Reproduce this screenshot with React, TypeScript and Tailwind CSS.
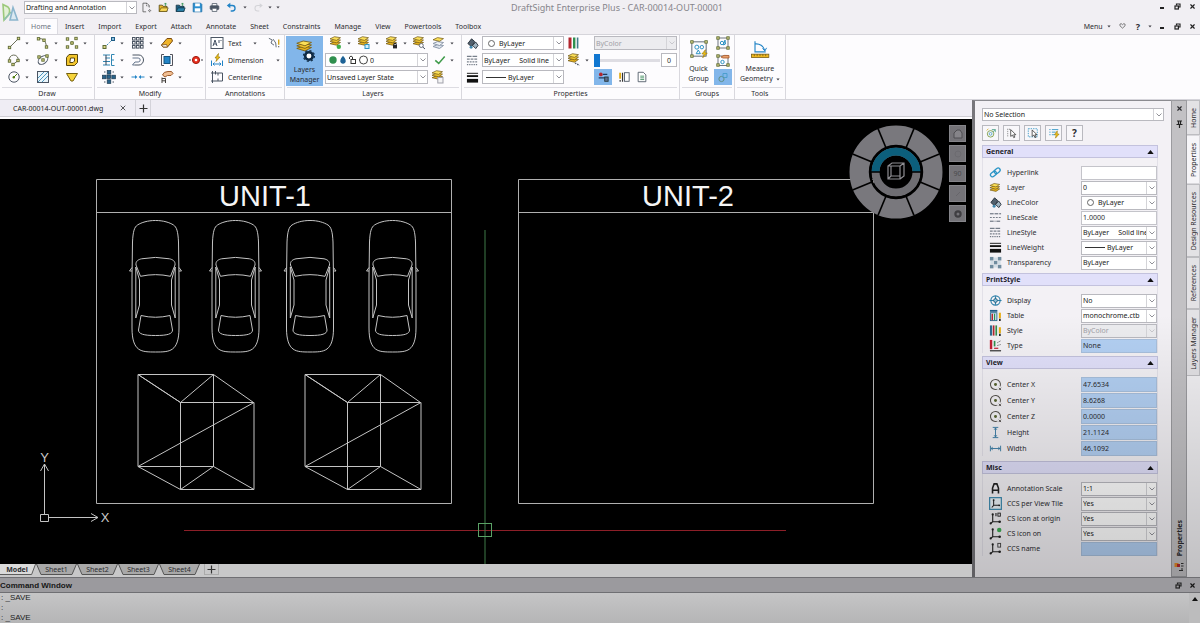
import React, { type ReactNode } from "react";
import { X } from "lucide-react";

/* ---------- small drawing helpers ---------- */

function Ico({ children, className = "size-3.5" }: { children: ReactNode; className?: string }) {
  return (
    <svg viewBox="0 0 14 14" fill="none" stroke="#4b5563" strokeWidth="1" className={`${className} block shrink-0`} aria-hidden="true">
      {children}
    </svg>
  );
}

function Dot({ x, y }: { x: number; y: number }) {
  return <rect x={x - 1.2} y={y - 1.2} width="2.4" height="2.4" fill="#dfd98a" stroke="#5d6a35" strokeWidth="0.9" />;
}

function Caret() {
  return (
    <svg viewBox="0 0 4 3" className="block h-[3px] w-1 shrink-0" aria-hidden="true">
      <path d="M0.4 0.5H3.6L2 2.6Z" fill="#3f3f46" />
    </svg>
  );
}

function Stack({ y = 0, children }: { y?: number; children?: ReactNode }) {
  return (
    <>
      <path d={`M1 ${y + 8.7}L5.5 ${y + 6.5}L11.5 ${y + 7.5}L7.5 ${y + 10.2}Z`} fill="#e3b01f" stroke="#6b5310" strokeWidth="0.7" />
      <path d={`M1 ${y + 6.3}L5.5 ${y + 4.1}L11.5 ${y + 5.1}L7.5 ${y + 7.8}Z`} fill="#f1c52e" stroke="#6b5310" strokeWidth="0.7" />
      <path d={`M1 ${y + 3.9}L5.5 ${y + 1.7}L11.5 ${y + 2.7}L7.5 ${y + 5.4}Z`} fill="#fbdf59" stroke="#6b5310" strokeWidth="0.7" />
      {children}
    </>
  );
}

const icons = {
  line: (<><path d="M2.5 11.5L11.5 2.5" stroke="#6b6f5a" /><Dot x={2.5} y={11.5} /><Dot x={11.5} y={2.5} /></>),
  arc: (<><path d="M2.5 2.5Q9.5 2 10.5 10.5" stroke="#6b6f5a" /><Dot x={2.5} y={2.8} /><Dot x={8} y={4.2} /><Dot x={10.5} y={11} /></>),
  points: (<><path d="M5 7H9M7 5V9" stroke="#7a8a3e" /><Dot x={2.5} y={3} /><Dot x={11} y={2.5} /><Dot x={7} y={7} /><Dot x={2.5} y={11} /><Dot x={11.5} y={11} /></>),
  polyline: (<><path d="M2.5 8A4.5 4.5 0 1 1 11 8M6 11.5L10.5 8" stroke="#6b6f5a" /><Dot x={2.5} y={8} /><Dot x={11} y={7.5} /><Dot x={6} y={11.5} /></>),
  ellipse: (<><ellipse cx="7" cy="7" rx="5.4" ry="3.6" transform="rotate(-38 7 7)" /><Dot x={7} y={7} /><Dot x={11} y={3} /><Dot x={3} y={4} /></>),
  region: (<><path d="M4 1.5H12.5V9.5L9.5 12.5H1.5V4.5Z" fill="#f2c52c" stroke="#57460f" /><path d="M5.5 5H9.5V8L8 9.5H4.8Z" fill="#fff" stroke="#57460f" /></>),
  circle: (<><circle cx="7" cy="7" r="5.2" /><path d="M7 7L10 4" stroke="#4d7c0f" /><circle cx="6.8" cy="7.3" r="1.2" fill="#4d7c0f" stroke="none" /></>),
  hatch: (<><rect x="1.5" y="1.5" width="11" height="11" fill="#eaf5fb" /><path d="M2 8L8 2M2 12L12 2M6 12L12 6" stroke="#3c8cb8" strokeWidth="0.9" /></>),
  mask: <path d="M1.5 3.5H12.5L8 11H6Z" fill="#f6d43b" stroke="#75600e" />,
  move: (<><path d="M2.5 11.5L11.5 2.5" stroke="#3c8cb8" strokeDasharray="2 1.4" /><rect x="1" y="9.5" width="3" height="3" fill="#dfd98a" stroke="#5d6a35" /><rect x="9.5" y="1.5" width="3" height="3" fill="#8cc0de" stroke="#1f5c86" /></>),
  pattern: (<>{[1.5, 5.5, 9.5].map((y) => [1.5, 5.5, 9.5].map((x) => <rect key={`${x}-${y}`} x={x} y={y} width="2.6" height="2.6" />))}</>),
  erase: (<><path d="M1.5 9L7 2.5H11.5L12.5 5L7.5 11H3Z" fill="#f0b429" stroke="#7a4a10" /><path d="M1.5 9L3 11H7.5L6.5 8.5Z" fill="#fff" stroke="#7a4a10" strokeWidth="0.8" /></>),
  align: (<><path d="M1 2H8M3.5 5H8M1 8.5H8M1 12H8" stroke="#2f86b3" /><path d="M4 2V12" stroke="#334155" /><path d="M12.5 1.5H9.5V12.5H12.5M9.5 7H12" stroke="#2f86b3" /></>),
  offset: (<><path d="M1.5 2H8A4.5 5 0 0 1 8 12H4" /><path d="M1.5 5H7.2A2 2 0 0 1 7.2 9H4L1.5 12H4" stroke="#64748b" /></>),
  stretch: (<><rect x="4" y="3.5" width="6" height="7" fill="#2384c6" stroke="#14547f" /><path d="M1.5 1.5V12.5M12.5 1.5V12.5M1.5 1.5H4M10 1.5H12.5M1.5 12.5H4M10 12.5H12.5" stroke="#52525b" /></>),
  explode: (<><path d="M0 7H14" stroke="#3f3f46" strokeDasharray="2 1" /><circle cx="7" cy="7" r="3.6" fill="#e8301f" stroke="#a11c10" /><circle cx="7" cy="7" r="1.3" fill="#fff" stroke="none" /></>),
  scale: (<>{[[5, 5], [5.2, 0.5], [0.5, 5.2], [9.8, 5.2], [5.2, 9.8]].map(([x, y]) => <rect key={`${x}-${y}`} x={x} y={y} width="3.6" height="3.6" fill="#28638a" stroke="#1e3a4f" strokeWidth="0.7" />)}<path d="M2 2H3.5M10.5 2H12M2 12H3.5M10.5 12H12" /></>),
  trim: (<><path d="M0.5 7H5M13.5 7H9" stroke="#2384c6" /><path d="M4 5L6.4 7L4 9ZM10 5L7.6 7L10 9Z" fill="#2384c6" stroke="none" /></>),
  change: (<><path d="M2.5 5Q3.5 1.5 8 1.5H11.5L13 3.5L11 5.5H7.5L5 7Z" fill="#f1bf93" stroke="#9a5a2c" /><path d="M2 13V7.5M2 8.5H5.5V13M2 10.8H5.5" stroke="#44403c" /></>),
  text: (<><rect x="1" y="1.5" width="12" height="11" fill="#fff" /><path d="M3 10L5 4L7 10M3.7 8H6.3M9 4V7M10.5 4.5H11.5" stroke="#334155" strokeWidth="0.9" /></>),
  dimension: (<><path d="M8.5 0.5L5 5H7L6 8.5L10 4H8Z" fill="#f5c518" stroke="#8b6b00" strokeWidth="0.6" /><path d="M1.5 7.5V13M12.5 7.5V13M3 11H11M4.5 9.5L3 11L4.5 12.5M9.5 9.5L11 11L9.5 12.5" stroke="#2384c6" /></>),
  centerline: (<><path d="M2.5 1V13M1 3H8M1 11H8M5.5 1V4.5M8 3H12.5V11H8V8.5M8 3V5.5" /></>),
  cloud: (<><path d="M1 1.5L5 3.5L3.5 7L7 9.5M6 2.5L9 7L9.5 12" /><path d="M12.5 3V9" stroke="#d4a514" strokeWidth="1.6" /><path d="M12.5 10.5V12" stroke="#333" /></>),
  layerNew: <Stack y={-1}><circle cx="9.8" cy="10.8" r="2.2" fill="#3fae49" stroke="none" /></Stack>,
  layerFreeze: <Stack y={-1}><rect x="8" y="8.5" width="4" height="4" fill="#d7f0fb" stroke="#2f93c5" /></Stack>,
  layerLock: <Stack y={-1}><rect x="8" y="9" width="4" height="3.4" fill="#27272a" stroke="none" /><path d="M8.9 9V7.5H11.2V9" stroke="#27272a" /></Stack>,
  layerFind: <Stack y={-1}><circle cx="9.3" cy="9.5" r="2" fill="#fff" stroke="#6b7280" /><path d="M10.8 11L13 13" /></Stack>,
  layerCopy: (<><path d="M1 10.5L5.5 8.6L11.5 9.5L7.5 12.5Z" fill="#dbe2ec" stroke="#8d99ab" /><path d="M1 7.5L5.5 5.6L11.5 6.5L7.5 9.5Z" fill="#eef2f7" stroke="#8d99ab" /><path d="M1 3.8L5.5 1.6L11.5 2.6L7.5 5.3Z" fill="#fbdf59" stroke="#6b5310" strokeWidth="0.7" /></>),
  layerState: <Stack y={-1}><rect x="6.8" y="7.5" width="5.2" height="5.5" fill="#f4f4f5" stroke="#a1a1aa" /></Stack>,
  check: <path d="M1.5 7.5L5.5 11L12.5 3" stroke="#3f9b4a" strokeWidth="1.8" />,
  gearStack: (
    <g strokeWidth="0.5" stroke="#7a5c10">
      <path d="M2.2 4.9L6 3.6L10.8 4.4L7 6.4Z" fill="#e3b01f" />
      <path d="M2.2 3.4L6 2.1L10.8 2.9L7 4.9Z" fill="#f1c52e" />
      <path d="M2.2 1.9L6 0.6L10.8 1.4L7 3.4Z" fill="#fbdf59" />
      <circle cx="9.3" cy="9.3" r="2.2" stroke="#0f2b46" strokeWidth="1.5" fill="#fff" />
      <circle cx="9.3" cy="9.3" r="3.2" stroke="#0f2b46" strokeWidth="0.7" strokeDasharray="1.2 1.3" />
    </g>
  ),
  color: (<><path d="M2 7L6 2L9.5 5L6 10.5Z" fill="#52606d" stroke="#27313a" /><path d="M7 9L10.5 5.5L13 9L10.5 12.5Z" fill="#9fb3c1" stroke="#27313a" /><circle cx="5.5" cy="11" r="1.6" fill="#3e87ae" stroke="none" /></>),
  style: (<><path d="M1 2.5H13" strokeDasharray="5 1" /><path d="M1 5.5H13" strokeDasharray="3 1" /><path d="M1 8.5H13" strokeDasharray="2 1" /><path d="M1 11.5H13" strokeDasharray="1.4 1" /></>),
  weight: (<><path d="M1 2.5H13" stroke="#111" /><path d="M1 5.5H13" stroke="#111" strokeWidth="2" /><path d="M1 10.5H13" stroke="#111" strokeWidth="4" /></>),
  bars: (<><path d="M3 1.5V12.5" stroke="#b3262e" strokeWidth="3" /><path d="M7.2 1.5V12.5" stroke="#2f8f4e" strokeWidth="2.4" /><path d="M10.6 1.5V12.5" stroke="#3f7d8a" strokeWidth="1.6" /></>),
  transparency: <Stack y={-1}><path d="M8 10L12.5 12.5" strokeWidth="1.4" strokeDasharray="1.5 1" /></Stack>,
  propA: (<><circle cx="4.5" cy="4" r="2.2" fill="#b3262e" stroke="none" /><path d="M7 4H12M2 8H10" stroke="#1e3a5f" strokeWidth="1.6" /><rect x="9" y="7" width="4" height="5" fill="#5b6f92" stroke="#233" /></>),
  propB: (<><path d="M2.5 2V9" stroke="#e0a912" strokeWidth="2.2" /><path d="M2.5 10.5V12.5M5.3 2V12.5" stroke="#333" strokeWidth="1.4" /><rect x="7.5" y="2" width="5.5" height="10" fill="#fff" /></>),
  sheet: (<><path d="M2.5 1.5H8.5L11.5 4.5V12.5H2.5Z" fill="#fff" /><path d="M5 6H9.5M5 8H9.5M5 10H9.5" stroke="#3c8a5b" /></>),
  group: (<><rect x="2" y="2" width="10" height="10" strokeWidth="0.8" /><Dot x={2} y={2} /><Dot x={12} y={2} /><Dot x={2} y={12} /><Dot x={12} y={12} /><circle cx="6" cy="7" r="1.7" stroke="#2f93c5" /><path d="M9 4L9.5 8L7.5 9Z" stroke="#2f93c5" /></>),
  groupEdit: (<><rect x="2" y="3" width="10" height="9.5" strokeWidth="0.8" /><Dot x={2} y={3} /><Dot x={2} y={12} /><Dot x={12} y={12} /><path d="M5 4Q7 1.5 13 2.5V5H7Z" fill="#e8a06c" stroke="#a4562a" strokeWidth="0.8" /><circle cx="6.5" cy="9" r="1.7" stroke="#2f93c5" /></>),
  quick: (<><rect x="2" y="2" width="10" height="10" strokeWidth="0.6" /><g strokeWidth="0.6"><rect x="1.2" y="1.2" width="1.7" height="1.7" fill="#dfd98a" stroke="#5d6a35" /><rect x="11.1" y="1.2" width="1.7" height="1.7" fill="#dfd98a" stroke="#5d6a35" /><rect x="1.2" y="11.1" width="1.7" height="1.7" fill="#dfd98a" stroke="#5d6a35" /></g><circle cx="5.5" cy="5.7" r="1.4" stroke="#2f93c5" strokeWidth="0.7" /><circle cx="9" cy="5.7" r="1.2" stroke="#2f93c5" strokeWidth="0.7" /><path d="M5 10.3L6.5 7.7L8 10.3Z" stroke="#2f93c5" strokeWidth="0.7" /><path d="M11.5 7.5L9 10.5H10.6L9.6 13.2L12.8 9.8H11.2Z" fill="#f5c518" stroke="#8b6b00" strokeWidth="0.4" /></>),
  measure: (<><path d="M3.5 1.5V9H11M3.5 3.5A6 6 0 0 1 10.3 8" stroke="#2384c6" strokeWidth="0.8" /><path d="M8.8 6.5L10.4 8.4L11.6 6.2" stroke="#2384c6" strokeWidth="0.7" /><rect x="1" y="10.6" width="12.2" height="2.4" fill="#f0b91f" stroke="#6b5310" strokeWidth="0.5" /><path d="M3 10.6V12M5 10.6V12M7 10.6V12M9 10.6V12M11 10.6V12" stroke="#6b5310" strokeWidth="0.5" /></>),
  groupPick: (<><circle cx="5.5" cy="9" r="2.6" stroke="#5f8f86" /><path d="M7 7.5V3.5H11V7.5H8" stroke="#4b9fce" /></>),
  newDoc: (<><path d="M2.5 1.5H7.5L10.5 4.5V7M6.5 12.5H2.5V1.5" stroke="#555" /><path d="M7 1.5V5H10M9 11H13M11 9V13" stroke="#555" strokeDasharray="1.5 1" /></>),
  open: (<><path d="M1.5 12V4H5.5L6.5 5.5H11.5V12Z" fill="#e9b629" stroke="#4f4210" /><path d="M1.5 12L4 7.5H13L11 12Z" fill="#fbd95a" stroke="#4f4210" strokeWidth="0.8" /><path d="M9.5 5V1.5M8 3L9.5 1.2L11 3" stroke="#2f8f4e" /></>),
  openCloud: (<><path d="M1.5 12V4H5.5L6.5 5.5H11.5V12Z" fill="#1d5c7f" stroke="#12303f" /><path d="M1.5 12L4 7.5H13L11 12Z" fill="#2a82ab" stroke="#12303f" strokeWidth="0.8" /><path d="M9.5 5V1.5M8 3L9.5 1.2L11 3" stroke="#2f8f4e" /></>),
  save: (<><path d="M1.5 1.5H11L12.5 3V12.5H1.5Z" fill="#2b8fd0" stroke="#1c6fa8" /><rect x="4" y="1.8" width="6" height="3.7" fill="#fff" stroke="none" /><rect x="3.5" y="8" width="7" height="4.2" fill="#fff" stroke="none" /></>),
  print: (<><path d="M4 5V2H10V5" fill="#fff" /><rect x="1.5" y="4.8" width="11" height="4.7" rx="1" fill="#4b5563" /><path d="M4 8H10V12H4Z" fill="#fff" /></>),
  undo: (<><path d="M3 4.5H8A3.4 3.4 0 0 1 8 11.5H6" stroke="#2384c6" strokeWidth="1.7" /><path d="M5.5 1L1 4.5L5.5 8Z" fill="#2384c6" stroke="none" /></>),
  redo: (<><path d="M11 4.5H6A3.4 3.4 0 0 0 6 11.5H8" stroke="#d4d4d8" strokeWidth="1.4" /><path d="M8.5 1.5L12.5 4.5L8.5 7.5Z" fill="#d4d4d8" stroke="none" /></>),
  link: (<g transform="rotate(-40 7 7)" stroke="#2b95c6" strokeWidth="1.4"><rect x="0.8" y="4.6" width="7" height="4.4" rx="2.2" /><rect x="6" y="4.6" width="7" height="4.4" rx="2.2" /></g>),
  layers: <Stack y={1} />,
  lineScale: (<><path d="M1 3H13" strokeDasharray="4 1" /><path d="M1 7H13" strokeDasharray="2 1.2" strokeWidth="0.8" /><path d="M1 11H13" strokeDasharray="4 1 1 1" /></>),
  checker: (<><path d="M5 3H9M3 5V9M11 5V9M5 11H9" stroke="#d3dee6" strokeWidth="3" />{[[1, 1], [9.5, 1], [5.2, 5.2], [1, 9.5], [9.5, 9.5]].map(([x, y]) => <rect key={`${x}-${y}`} x={x} y={y} width="3.8" height="3.8" fill="#6f8c9f" stroke="none" />)}</>),
  globe: (<><circle cx="7" cy="7" r="5" stroke="#2b7fa8" strokeWidth="1.2" /><path d="M0.5 7H13.5M7 2.5V11.5" stroke="#2b7fa8" strokeWidth="1.2" /><circle cx="7" cy="7" r="2" fill="#8fc3dc" stroke="#22607f" /></>),
  table: (<><path d="M1 2H9" stroke="#1f5c86" strokeWidth="2" /><rect x="1.5" y="4" width="7" height="8.5" fill="#cfe4ef" stroke="#2c6c90" /><path d="M3.5 5V12" stroke="#b3262e" strokeWidth="1.6" /><path d="M6 5V12" stroke="#2f8f4e" strokeWidth="1.2" /><path d="M11.7 4V10" stroke="#e6ac12" strokeWidth="2.2" /><path d="M11.7 10.5V13" stroke="#222" strokeWidth="1.8" /></>),
  styleBars: (<><path d="M2.2 1.5V12.5" stroke="#2c6c90" strokeWidth="2.4" /><path d="M5 1.5V12.5" stroke="#b3262e" strokeWidth="1.8" /><path d="M7.8 1.5V12.5" stroke="#2f8f4e" strokeWidth="1.8" /><path d="M11.7 3.5V10" stroke="#e6ac12" strokeWidth="2.2" /><path d="M11.7 10.5V13" stroke="#222" strokeWidth="1.8" /></>),
  type: (<><path d="M2.2 1V11" stroke="#c01f34" strokeWidth="2.6" /><path d="M1 12.7H13" stroke="#222" strokeWidth="1.2" /><path d="M6 2V8" stroke="#2f8f4e" strokeWidth="1.8" /><path d="M9 4L12.5 2M9 7L12.5 6" stroke="#555" strokeDasharray="1.4 1" /><path d="M5.5 10H10" stroke="#c01f34" strokeWidth="1.3" /></>),
  center: (<><path d="M12 9A5.4 5.4 0 1 0 9 12" stroke="#57534e" strokeWidth="1.1" /><circle cx="7" cy="7" r="1.6" fill="#57632f" stroke="none" /><path d="M10.5 10.5L13 13M13 10.5L10.5 13" stroke="#44403c" strokeWidth="0.9" /></>),
  height: <path d="M4 1.5H10M4 12.5H10M7 2V12M5.6 4L7 2.2L8.4 4M5.6 10L7 11.8L8.4 10" stroke="#3a7ca5" />,
  width: <path d="M1.5 4V10M12.5 4V10M2 7H12M4 5.6L2.2 7L4 8.4M10 5.6L11.8 7L10 8.4" stroke="#3a7ca5" />,
  annot: <path d="M3.8 12.5V6.5L5.5 2H8.5L10.2 6.5V12.5M3.8 8.8H10.2" stroke="#222" strokeWidth="1.7" />,
  ccsView: (<><rect x="0.7" y="0.7" width="12.6" height="12.6" fill="#eef4f8" stroke="#3b8ab0" strokeWidth="1.3" /><path d="M5 3V9H11M5 9L3 11.3" stroke="#222" strokeWidth="1.1" /><circle cx="5" cy="3.3" r="1" fill="#222" stroke="none" /><circle cx="11" cy="9" r="1" fill="#222" stroke="none" /></>),
  ccsOrigin: (<><path d="M4 3V10.5H11M4 10.5L1.5 12.5M7.5 1V4.5" stroke="#222" strokeWidth="1.2" /><rect x="9.6" y="1.2" width="2.6" height="3.3" stroke="#222" /><circle cx="4" cy="2.6" r="1.2" fill="#222" stroke="none" /><circle cx="11.5" cy="10.5" r="1.4" fill="#222" stroke="none" /><circle cx="1.8" cy="12.3" r="1.2" fill="#222" stroke="none" /></>),
  ccsOn: (<><path d="M4 3V10.5H11M4 10.5L1.5 12.5" stroke="#222" strokeWidth="1.2" /><circle cx="4" cy="2.6" r="1.2" fill="#222" stroke="none" /><circle cx="11.5" cy="10.5" r="1.4" fill="#222" stroke="none" /><circle cx="1.8" cy="12.3" r="1.2" fill="#222" stroke="none" /><circle cx="11" cy="3.2" r="2.4" fill="#3fae55" stroke="none" /></>),
  ccsName: (<><path d="M4 3V10.5H11M4 10.5L1.5 12.5" stroke="#222" strokeWidth="1.2" /><circle cx="4" cy="2.6" r="1.2" fill="#222" stroke="none" /><circle cx="11.5" cy="10.5" r="1.4" fill="#222" stroke="none" /><circle cx="1.8" cy="12.3" r="1.2" fill="#222" stroke="none" /><rect x="9.5" y="1.5" width="3" height="4" stroke="#444" /></>),
  pickAdd: (<><circle cx="6.5" cy="8" r="3.8" stroke="#7a9a43" /><circle cx="6.5" cy="8" r="1.6" stroke="#4fa0c6" /><path d="M8 3H12V6M12 3L9 6" stroke="#4fa38c" /><path d="M2 4L4 2" stroke="#d5b22b" /></>),
  pick: (<><path d="M2 2V11M4 2V4" stroke="#888" strokeDasharray="1.5 1" /><path d="M5.5 3V11L7.6 9.4L9 12.4L10.4 11.8L9 9H11.5Z" fill="#fff" stroke="#333" strokeWidth="0.9" /></>),
  pickBox: (<><rect x="1.5" y="2" width="10.5" height="9.5" stroke="#2f93c5" strokeDasharray="1.6 1.2" /><path d="M6 3.5V11L8 9.4L9.3 12.4L10.6 11.8L9.3 9H11.7Z" fill="#fff" stroke="#333" strokeWidth="0.9" /></>),
  quickPick: (<><path d="M1.5 3H3M4.5 3H12M1.5 6H3M4.5 6H9M1.5 9H3M4.5 9H8" stroke="#2f93c5" /><path d="M10.8 4.5L7.5 9H9.5L8.7 13L13 8.2H10.8Z" fill="#f5c518" stroke="#8b6b00" strokeWidth="0.6" /></>),
};
type IconName = keyof typeof icons;

function Icon({ name, className }: { name: IconName; className?: string }) {
  return <Ico className={className}>{icons[name]}</Ico>;
}

/* ---------- controls ---------- */

function Tool({ icon, label, caret = true }: { icon: IconName; label: string; caret?: boolean }) {
  return (
    <button type="button" aria-label={label} className="flex h-4 w-[29px] items-center gap-1">
      <Icon name={icon} />
      {caret && <Caret />}
    </button>
  );
}

function Combo({ label, value, prefix, disabled = false, id, options = [], className = "" }: { label: string; value: string; prefix?: ReactNode; disabled?: boolean; id?: string; options?: string[]; className?: string }) {
  return (
    <div className={`flex items-center overflow-hidden border border-[#b9b9bf] pl-px ${disabled ? "bg-[#ececef] text-[#a0a0a6]" : "bg-white text-[#222]"} ${className}`}>
      {prefix}
      <select id={id} aria-label={id ? undefined : label} disabled={disabled} defaultValue={value} className="h-full min-w-0 flex-1 appearance-none bg-transparent p-0 leading-[11px] outline-none">
        <option>{value}</option>
        {options.map((o) => (
          <option key={o}>{o}</option>
        ))}
      </select>
      <span className="pointer-events-none flex h-full w-2.5 shrink-0 items-center justify-center border-l border-[#d4d4d8]">
        <svg viewBox="0 0 6 4" className="h-1 w-1.5" aria-hidden="true">
          <path d="M0.5 0.5L3 3L5.5 0.5" fill="none" stroke={disabled ? "#c4c4c8" : "#85858c"} strokeWidth="0.9" />
        </svg>
      </span>
    </div>
  );
}

const Ring = () => <span className="mx-1 size-[7px] shrink-0 rounded-full border border-[#666] bg-white" />;
const Rule = () => <span className="mx-0.5 h-px w-5 shrink-0 bg-[#333]" />;

function Group({ name, className = "", children }: { name: string; className?: string; children: ReactNode }) {
  return (
    <section aria-label={name} className="flex shrink-0 flex-col border-r border-[#d9d8de]">
      <div className={`flex h-[52px] items-start ${className}`}>{children}</div>
      <h2 className="mx-0.5 flex h-3 items-center justify-center border-t border-[#dddce2]">{name}</h2>
    </section>
  );
}

function WindowButtons() {
  return (
    <div className="flex items-center gap-2 text-[#222]">
      <button type="button" aria-label="Minimize" className="flex h-2 w-1.5 items-end pb-px"><span className="h-0.5 w-1 bg-[#222]" /></button>
      <button type="button" aria-label="Restore"><RestoreIcon /></button>
      <button type="button" aria-label="Close"><X className="size-[7px]" strokeWidth={4} /></button>
    </div>
  );
}

function RestoreIcon() {
  return (
    <svg viewBox="0 0 7 7" className="block size-[7px]" fill="none" stroke="#222" aria-hidden="true">
      <path d="M2.5 2.5V1H6V4H4.5" strokeWidth="1.2" />
      <rect x="1" y="3" width="3.4" height="3" strokeWidth="1.2" />
    </svg>
  );
}

/* ---------- header ---------- */

const menuTabs = ["Home", "Insert", "Import", "Export", "Attach", "Annotate", "Sheet", "Constraints", "Manage", "View", "Powertools", "Toolbox"];

function Header() {
  return (
    <header className="flex bg-[#f1eff3]">
      <svg viewBox="0 0 24 34" className="h-[34px] w-6 shrink-0" role="img" aria-label="DraftSight">
        <path d="M3 4.5L8 7Q11 10 8.5 15L4 20Z" fill="#e3f0d6" stroke="#9cc97b" strokeWidth="1.6" />
        <path d="M13 7.5L17.5 20H10Z" fill="#dbe9f1" stroke="#8bb5cd" strokeWidth="1.6" />
        <path d="M4 20L11 12" stroke="#8fc0ae" strokeWidth="1.6" />
      </svg>
      <div className="min-w-0 flex-1">
        <div className="grid h-[18px] grid-cols-[1fr_auto_1fr] items-start">
          <div className="flex items-center gap-1 pt-px">
            <Combo label="Workspace" value="Drafting and Annotation" className="h-[13px] w-[113px]" />
            {(["newDoc", "open", "openCloud", "save", "print", "undo"] as IconName[]).map((n) => (
              <button key={n} type="button" aria-label={n} className="mr-0.5"><Icon name={n} className="size-[11px]" /></button>
            ))}
            <Caret />
            <button type="button" aria-label="Redo" className="ml-0.5"><Icon name="redo" className="size-[11px]" /></button>
            <Caret />
            <Caret />
          </div>
          <h1 className="pl-2.5 text-[9px] leading-4 text-[#86858b]">DraftSight Enterprise Plus - CAR-00014-OUT-00001</h1>
          <div className="flex justify-end pt-0.5 pr-1"><WindowButtons /></div>
        </div>
        <div className="flex h-4 items-end justify-between">
          <nav className="flex">
            {menuTabs.map((t, i) => (
              <button key={t} type="button" className={i === 0 ? "h-4 border border-b-0 border-[#dcdbe1] bg-[#fdfcfe] px-1.5 text-[#6b7280]" : "h-4 px-[7px]"}>{t}</button>
            ))}
          </nav>
          <div className="flex h-4 items-center gap-2 pr-1">
            <button type="button" className="flex items-center gap-1">Menu <Caret /></button>
            <button type="button" aria-label="Favorites">
              <svg viewBox="0 0 8 7" className="h-[6px] w-[7px]" fill="none" stroke="#666" aria-hidden="true"><path d="M4 6L1 3.2V1.4L2.5 0.8L4 2L5.5 0.8L7 1.4V3.2Z" /></svg>
            </button>
            <button type="button" className="flex items-center gap-2 pl-0.5 text-[9px] font-bold">? <Caret /></button>
            <WindowButtons />
          </div>
        </div>
      </div>
    </header>
  );
}

/* ---------- ribbon ---------- */

const col = "flex flex-col gap-px";

function Ribbon() {
  return (
    <div className="flex h-[66px] border-y border-[#d6d5db] bg-[#fdfcfe]">
      <Group name="Draw" className="pl-[7px]">
        <div className="grid grid-cols-3 gap-y-px">
          <Tool icon="line" label="Line" />
          <Tool icon="arc" label="Arc" />
          <Tool icon="points" label="Points" />
          <Tool icon="polyline" label="Polyline" />
          <Tool icon="ellipse" label="Ellipse" />
          <Tool icon="region" label="Region" caret={false} />
          <Tool icon="circle" label="Circle" />
          <Tool icon="hatch" label="Hatch" />
          <Tool icon="mask" label="Mask" caret={false} />
        </div>
      </Group>
      <Group name="Modify" className="pr-px pl-[7px]">
        <div className="grid grid-cols-[29px_29px_29px_15px] gap-y-px">
          <Tool icon="move" label="Move" />
          <Tool icon="pattern" label="Pattern" />
          <Tool icon="erase" label="Erase" />
          <span />
          <Tool icon="align" label="Align" />
          <Tool icon="offset" label="Offset" caret={false} />
          <Tool icon="stretch" label="Stretch" caret={false} />
          <Tool icon="explode" label="Explode" caret={false} />
          <Tool icon="scale" label="Scale" />
          <Tool icon="trim" label="Trim" />
          <Tool icon="change" label="Change" />
        </div>
      </Group>
      <Group name="Annotations" className="px-1">
        <div className={`${col} w-[70px]`}>
          <div className="flex h-4 items-center justify-between">
            <button type="button" className="flex items-center gap-1"><Icon name="text" />Text</button>
            <Caret />
            <button type="button" aria-label="Cloud"><Icon name="cloud" className="size-3" /></button>
          </div>
          <button type="button" className="flex h-4 items-center gap-1"><Icon name="dimension" />Dimension<span className="ml-auto"><Caret /></span></button>
          <button type="button" className="flex h-4 items-center gap-1"><Icon name="centerline" />Centerline</button>
        </div>
      </Group>
      <Group name="Layers" className="gap-0.5 px-px">
        <button type="button" className="mt-px flex h-[50px] w-[37px] flex-col items-center justify-between bg-[#82b6ea] pt-1 pb-px leading-[10px]">
          <Icon name="gearStack" className="size-6" />
          <span>Layers<br />Manager</span>
        </button>
        <div className={`${col} w-[135px]`}>
          <div className="flex h-4 items-center pl-1">
            <Tool icon="layerNew" label="New layer" />
            <Tool icon="layerFreeze" label="Freeze layer" />
            <Tool icon="layerLock" label="Lock layer" />
            <button type="button" aria-label="Find layer" className="mr-1.5"><Icon name="layerFind" /></button>
            <Tool icon="layerCopy" label="Copy layer" />
          </div>
          <div className="flex h-4 items-center justify-between pr-1.5">
            <Combo
              label="Active layer"
              value="0"
              options={["Defpoints"]}
              className="h-3.5 w-[103px]"
              prefix={
                <svg viewBox="0 0 42 12" className="mr-px h-3 w-[42px] shrink-0" aria-hidden="true">
                  <circle cx="6" cy="6" r="3.7" fill="#2f8f4e" />
                  <path d="M16 1.8Q12 6.3 13.8 8.8Q16 10.8 18.2 8.8Q20 6.3 16 1.8Z" fill="#1d6296" />
                  <path d="M22.5 5V3.2Q24 1 25.5 3V6" fill="none" stroke="#333" />
                  <rect x="24" y="5.5" width="4.5" height="4" fill="#fff" stroke="#333" />
                  <circle cx="36.5" cy="6" r="4" fill="#fff" stroke="#444" />
                </svg>
              }
            />
            <button type="button" aria-label="Apply" className="flex items-center gap-1"><Icon name="check" className="size-3" /><Caret /></button>
          </div>
          <div className="flex h-4 items-center gap-[3px]">
            <Combo label="Layer state" value="Unsaved Layer State" className="h-3.5 w-[103px]" />
            <button type="button" aria-label="Layer states"><Icon name="layerState" /></button>
          </div>
        </div>
      </Group>
      <Group name="Properties" className="gap-[3px] pr-0.5 pl-1">
        <div className={col}>
          {([
            ["color", "Line color", <Combo key="c" label="Line color" value="ByLayer" prefix={<Ring />} className="h-3.5 w-[82px]" />],
            ["style", "Line style", <Combo key="s" label="Line style" value={"ByLayer \u00a0 \u00a0 Solid line"} className="h-3.5 w-[82px]" />],
            ["weight", "Line weight", <Combo key="w" label="Line weight" value="ByLayer" prefix={<Rule />} className="h-3.5 w-[82px]" />],
          ] as [IconName, string, ReactNode][]).map(([icon, label, combo]) => (
            <div key={label} className="flex h-4 items-center gap-[3px]"><Icon name={icon} className="size-[13px]" />{combo}</div>
          ))}
        </div>
        <div className={`${col} w-6`}>
          <button type="button" aria-label="Print style" className="flex h-4 items-center"><Icon name="bars" /></button>
          <Tool icon="transparency" label="Transparency" />
        </div>
        <div className={`${col} w-[83px]`}>
          <div className="flex h-4 items-center"><Combo label="Print style" value="ByColor" disabled className="h-3.5 flex-1" /></div>
          <div className="flex h-4 items-center gap-px">
            <input type="range" aria-label="Transparency level" min={0} max={90} defaultValue={0} className="h-3 min-w-0 flex-1 appearance-none bg-transparent [&::-webkit-slider-runnable-track]:h-[3px] [&::-webkit-slider-runnable-track]:bg-[#dedde3] [&::-webkit-slider-thumb]:-mt-[5px] [&::-webkit-slider-thumb]:h-[13px] [&::-webkit-slider-thumb]:w-1.5 [&::-webkit-slider-thumb]:appearance-none [&::-webkit-slider-thumb]:bg-[#1177d1]" />
            <input type="text" aria-label="Transparency value" defaultValue="0" className="h-3.5 w-4 border border-[#b9b9bf] bg-white p-0 text-center" />
          </div>
          <div className="flex h-4 items-center gap-1.5">
            <button type="button" aria-label="Match" className="flex h-4 w-[18px] items-center justify-center bg-[#82b6ea]"><Icon name="propA" className="size-3" /></button>
            <button type="button" aria-label="Paint"><Icon name="propB" className="size-3" /></button>
            <button type="button" aria-label="List"><Icon name="sheet" className="size-3" /></button>
          </div>
        </div>
      </Group>
      <Group name="Groups" className="pl-[3px]">
        <button type="button" className="flex h-[50px] w-[31px] flex-col items-center justify-between pt-1 pb-px leading-[10px]">
          <Icon name="quick" className="size-5" />
          <span>Quick<br />Group</span>
        </button>
        <div className={`${col} pr-0.5`}>
          <button type="button" aria-label="Group" className="flex h-4 w-[18px] items-center justify-center"><Icon name="group" /></button>
          <button type="button" aria-label="Edit group" className="flex h-4 w-[18px] items-center justify-center"><Icon name="groupEdit" /></button>
          <button type="button" aria-label="Pick group" className="flex h-4 w-[18px] items-center justify-center bg-[#82b6ea]"><Icon name="groupPick" /></button>
        </div>
      </Group>
      <Group name="Tools" className="px-[5px]">
        <button type="button" className="flex h-[50px] flex-col items-center justify-between pt-1 pb-px leading-[10px]">
          <Icon name="measure" className="size-5" />
          <span>Measure<span className="flex items-center gap-[3px]">Geometry <Caret /></span></span>
        </button>
      </Group>
    </div>
  );
}

/* ---------- drawing area ---------- */

function Car({ x }: { x: number }) {
  return (
    <g transform={`translate(${x} 220)`}>
      <path d="M0 0.5C-8 0.5 -14 2.5 -18 5C-21 7 -22.5 11 -23 22L-23.5 58V108C-23.5 120 -21 126 -17 129C-13 132 -7 132 0 132C7 132 13 132 17 129C21 126 23.5 120 23.5 108V58L23 22C22.5 11 21 7 18 5C14 2.5 8 0.5 0 0.5Z" />
      <path d="M-19.5 45C-20 41 -17 39.5 -14 38.8Q0 36 14 38.8C17 39.5 20 41 19.5 45L15 56.3Q0 53 -15 56.3Z" />
      <path d="M-19.7 47L-16 60V85L-19.7 98ZM19.7 47L16 60V85L19.7 98Z" />
      <path d="M-14.5 95.5Q0 99 14.5 95.5L17 110C17 114 12 115.5 0 115.5C-12 115.5 -17 114 -17 110Z" />
      <path d="M-23.5 47.5L-26 51H-23.5M23.5 47.5L26 51H23.5" />
    </g>
  );
}

function Box({ x }: { x: number }) {
  return (
    <path
      transform={`translate(${x} 374)`}
      d="M0.5 0.5H76L116 28.5H43ZL43 28.5L76 0.5V92.5H0.5V0.5M43 28.5V115.5H116.5V28.5L0.5 92.5L43 115.5L76 92.5L116.5 115.5M43 28.5H116"
    />
  );
}

const spokes = [22.5, 67.5, 112.5, 157.5, 202.5, 247.5, 292.5, 337.5];

function Canvas() {
  return (
    <div className="relative min-h-0 flex-1 bg-black">
      <svg viewBox="0 119 972 445" preserveAspectRatio="xMinYMin meet" className="block h-full w-full" role="img" aria-label="Model space">
        <g fill="none" stroke="#c4c4c4" strokeWidth="1">
          <path d="M96.5 179.5H451.5V503.5H96.5ZM96.5 212.5H451.5M518.5 179.5H873.5V503.5H518.5ZM518.5 212.5H873.5" stroke="#b0b0b0" />
          <Car x={155.5} />
          <Car x={235.5} />
          <Car x={310} />
          <Car x={392.5} />
          <Box x={137.5} />
          <Box x={304.5} />
          <path d="M44.5 514V464M40.5 471L44.5 464L48.5 471M48 517.5H98M91 513.5L98 517.5L91 521.5M40.5 514.5H48.5V521.5H40.5Z" />
        </g>
        <g fill="#f5f5f5" className="font-['Liberation_Sans',sans-serif] text-[29px]">
          <text x="265" y="206" textAnchor="middle">UNIT-1</text>
          <text x="688" y="206" textAnchor="middle">UNIT-2</text>
        </g>
        <g fill="#c9c9c9" className="font-['Liberation_Sans',sans-serif] text-[13px]">
          <text x="44.5" y="462" textAnchor="middle">Y</text>
          <text x="105" y="522" textAnchor="middle">X</text>
        </g>
        <path d="M184 530.5H786" stroke="#8c1f28" />
        <path d="M485 230V564" stroke="#3e7a48" />
        <rect x="478.5" y="523.5" width="13" height="13" fill="none" stroke="#5aa266" />
      </svg>
      <div className="absolute top-1.5 right-1.5 flex gap-1.5">
        <svg viewBox="-47 -47 94 94" className="size-[94px]" aria-hidden="true">
          <circle r="36.5" fill="none" stroke="#79787d" strokeWidth="20" />
          {spokes.map((a) => (
            <path key={a} d="M26 0H47" stroke="#000" strokeWidth="1.6" transform={`rotate(${a})`} />
          ))}
          <circle r="20.5" fill="none" stroke="#6f6e73" strokeWidth="8" />
          <path d="M-20.5 0A20.5 20.5 0 0 1 20.5 0" fill="none" stroke="#0c5f7c" strokeWidth="8" />
          <circle r="26" fill="none" stroke="#000" strokeWidth="2.4" />
          <path d="M-26 0H-16M16 0H26" stroke="#000" strokeWidth="1.4" />
          <path d="M-8 -6H4V7H-8ZM-8 -6L-4 -9H8V4L4 7M4 -6L8 -9M-5 -6V4H4M-5 4L-8 7" fill="none" stroke="#8e8d92" strokeWidth="1.2" />
        </svg>
        <div className="flex flex-col gap-[3px]">
          {["home", "rotate", "90", "tilt", "settings"].map((n) => (
            <button key={n} type="button" aria-label={n} className="flex size-[17px] items-center justify-center border border-[#85858a] bg-[#747378] text-[#4a4a4e]">
              {n === "90" && "90"}
              {n === "home" && <svg viewBox="0 0 10 10" className="size-2.5"><path d="M1 9V4L4 1H7L9 4V9Z" fill="#858489" stroke="#4f4e52" /></svg>}
              {n === "settings" && <svg viewBox="0 0 10 10" className="size-2.5"><circle cx="5" cy="5" r="2.6" fill="none" stroke="#3f3e42" strokeWidth="2.2" /></svg>}
              {n === "tilt" && <svg viewBox="0 0 10 10" className="size-2.5"><path d="M3 7L7 3" stroke="#67666b" /></svg>}
              {n === "rotate" && <svg viewBox="0 0 10 10" className="size-2.5"><circle cx="5" cy="5" r="3" fill="none" stroke="#6c6b70" /></svg>}
            </button>
          ))}
        </div>
      </div>
    </div>
  );
}

function SheetTab({ name, active = false }: { name: string; active?: boolean }) {
  return (
    <button type="button" className={`relative flex h-[11px] items-center justify-center ${active ? "w-9 pr-0.5 font-bold" : "w-[41px]"}`}>
      <svg viewBox="0 0 41 11" preserveAspectRatio="none" className="absolute inset-0 h-full w-full" aria-hidden="true">
        <path d={active ? "M-1 0V10.5H36L40.5 0" : "M0.5 0L5 10.5H36L40.5 0"} fill={active ? "#dadada" : "#a8a8a8"} stroke="#555" />
      </svg>
      <span className="relative">{name}</span>
    </button>
  );
}

function Workspace() {
  return (
    <main className="flex min-w-0 flex-1 flex-col">
      <div className="flex h-4 items-center bg-[#efedf4]">
        <button type="button" className="ml-[13px] text-[#222]">CAR-00014-OUT-00001.dwg</button>
        <button type="button" aria-label="Close drawing" className="ml-4"><X className="size-2" strokeWidth={2.4} /></button>
        <button type="button" aria-label="New drawing" className="ml-2 flex h-4 w-4 items-center justify-center border-x border-[#d4d3da]"><Plus /></button>
      </div>
      <div className="h-[3px] border-t border-[#cfced4] bg-[#fdfcfe]" />
      <Canvas />
      <div className="flex h-[13px] items-start bg-[#c8c8c9]">
        <SheetTab name="Model" active />
        {["Sheet1", "Sheet2", "Sheet3", "Sheet4"].map((s) => (
          <SheetTab key={s} name={s} />
        ))}
        <button type="button" aria-label="Add sheet" className="ml-1 flex h-[11px] w-[15px] items-center justify-center border border-t-0 border-[#aaa]"><Plus /></button>
      </div>
    </main>
  );
}

function Plus() {
  return (
    <svg viewBox="0 0 9 9" className="size-[9px]" aria-hidden="true">
      <path d="M4.5 0.5V8.5M0.5 4.5H8.5" stroke="#333" strokeWidth="1.2" />
    </svg>
  );
}

/* ---------- properties panel ---------- */

type Row = { icon: IconName; label: string; kind: "combo" | "text" | "read"; value: string; prefix?: ReactNode; disabled?: boolean };

const sections: { title: string; tall?: boolean; rows: Row[] }[] = [
  {
    title: "General",
    rows: [
      { icon: "link", label: "Hyperlink", kind: "text", value: "" },
      { icon: "layers", label: "Layer", kind: "combo", value: "0" },
      { icon: "color", label: "LineColor", kind: "combo", value: "ByLayer", prefix: <Ring /> },
      { icon: "lineScale", label: "LineScale", kind: "text", value: "1.0000" },
      { icon: "style", label: "LineStyle", kind: "combo", value: "ByLayer \u00a0 \u00a0 Solid line" },
      { icon: "weight", label: "LineWeight", kind: "combo", value: "ByLayer", prefix: <Rule /> },
      { icon: "checker", label: "Transparency", kind: "combo", value: "ByLayer" },
    ],
  },
  {
    title: "PrintStyle",
    rows: [
      { icon: "globe", label: "Display", kind: "combo", value: "No" },
      { icon: "table", label: "Table", kind: "combo", value: "monochrome.ctb" },
      { icon: "styleBars", label: "Style", kind: "combo", value: "ByColor", disabled: true },
      { icon: "type", label: "Type", kind: "read", value: "None" },
    ],
  },
  {
    title: "View",
    tall: true,
    rows: [
      { icon: "center", label: "Center X", kind: "read", value: "47.6534" },
      { icon: "center", label: "Center Y", kind: "read", value: "8.6268" },
      { icon: "center", label: "Center Z", kind: "read", value: "0.0000" },
      { icon: "height", label: "Height", kind: "read", value: "21.1124" },
      { icon: "width", label: "Width", kind: "read", value: "46.1092" },
    ],
  },
  {
    title: "Misc",
    rows: [
      { icon: "annot", label: "Annotation Scale", kind: "combo", value: "1:1" },
      { icon: "ccsView", label: "CCS per View Tile", kind: "combo", value: "Yes" },
      { icon: "ccsOrigin", label: "CS icon at origin", kind: "combo", value: "Yes" },
      { icon: "ccsOn", label: "CS icon on", kind: "combo", value: "Yes" },
      { icon: "ccsName", label: "CCS name", kind: "read", value: "" },
    ],
  },
];

function Field({ row, tall }: { row: Row; tall?: boolean }) {
  const id = row.label.toLowerCase().replace(/ /g, "-");
  return (
    <div className={`flex items-center ${tall ? "h-4" : "h-[15px]"}`}>
      <span className="flex w-6 justify-center"><Icon name={row.icon} className="size-[13px]" /></span>
      <label htmlFor={id} className="flex-1">{row.label}</label>
      <div className="w-[76px]">
        {row.kind === "combo" ? (
          <Combo id={id} label={row.label} value={row.value} prefix={row.prefix} disabled={row.disabled} className="h-3.5 w-full" />
        ) : (
          <input
            id={id}
            type="text"
            readOnly={row.kind === "read"}
            defaultValue={row.value}
            className={`block w-full border p-0 pl-px ${tall ? "h-[15px]" : "h-3.5"} ${row.kind === "read" ? "border-[#a8c0dd] bg-[#b3d0f3]" : "border-[#c4c4ca] bg-white"}`}
          />
        )}
      </div>
    </div>
  );
}

function Panel() {
  return (
    <div className="relative flex shrink-0">
      <aside aria-label="Properties" className="w-[199px] border-t border-l-3 border-t-[#8b8b90] border-l-[#77767b] bg-[#f3f1f5] pr-[13px] pl-[7px]">
        <Combo label="Selection" value="No Selection" className="-mr-1.5 mt-[7px] h-[13px]" />
        <div className="mt-1 mb-1 flex gap-1">
          {(["pickAdd", "pick", "pickBox", "quickPick"] as IconName[]).map((n) => (
            <button key={n} type="button" aria-label={n} className="flex h-4 w-[17px] items-center justify-center border border-[#b9b9bf] bg-[#f8f7fa]"><Icon name={n} className="size-3" /></button>
          ))}
          <button type="button" className="flex h-4 w-[17px] items-center justify-center border border-[#b9b9bf] bg-[#f8f7fa] text-[10px] font-bold">?</button>
        </div>
        {sections.map((s) => (
          <section key={s.title} className={s.tall ? "pb-[5px]" : "pb-[3px]"}>
            <h3 className="flex h-[13px] items-center justify-between border border-[#c3c2dd] bg-[#e1e0fa] px-[3px] font-bold text-[#1e1e2c]">
              {s.title}
              <svg viewBox="0 0 8 5" className="h-1 w-[7px]" aria-hidden="true"><path d="M4 0L8 5H0Z" fill="#111" /></svg>
            </h3>
            <div className="border-x border-[#e2e0e8] pt-[7px]">
              {s.rows.map((r) => (
                <Field key={r.label} row={r} tall={s.tall} />
              ))}
            </div>
          </section>
        ))}
      </aside>
      <div className="flex w-4 flex-col items-center border border-[#9b9b9f] bg-[#c2c1c4] pt-1">
        <button type="button" aria-label="Close panel"><X className="size-[7px]" strokeWidth={4} /></button>
        <button type="button" aria-label="Pin panel" className="mt-2">
          <svg viewBox="0 0 7 8" className="h-2 w-[7px]" aria-hidden="true"><path d="M1 1H6M2.5 1V4.5M4.5 1V4.5M0.5 4.5H6.5M3.5 4.5V8" stroke="#222" strokeWidth="1.2" fill="none" /></svg>
        </button>
        <span className="mt-auto mb-1.5 rotate-180 font-bold [writing-mode:vertical-rl]">Properties</span>
        <svg viewBox="0 0 10 10" className="mb-1 size-2.5" aria-hidden="true">
          <rect x="0.5" y="1" width="4" height="4" fill="#e08a2a" />
          <rect x="3" y="2" width="3" height="3" fill="#b3262e" />
          <path d="M7 1.5H9.5M7 4H9.5M5 8.5H9M8 6V9" stroke="#333" />
        </svg>
      </div>
      <nav aria-label="Panels" className="flex w-[13px] flex-col bg-[#f1f0f3]">
        {["Home", "Properties", "Design Resources", "References", "Layers Manager"].map((t) => (
          <button key={t} type="button" className={`flex w-full items-center justify-center border border-l-0 pt-[7px] pb-1.5 ${t === "Properties" ? "border-[#d9d8dc] bg-[#f6f5f8]" : "border-[#bdbdc1] bg-[#e3e2e5]"}`}>
            <span className="rotate-180 [writing-mode:vertical-rl]">{t}</span>
          </button>
        ))}
      </nav>
      <div className="pointer-events-none absolute inset-0 bg-linear-to-b from-black/0 from-45% to-black/20" />
    </div>
  );
}

/* ---------- command window ---------- */

function CommandWindow() {
  return (
    <section aria-label="Command Window" className="shrink-0 font-['Liberation_Sans',sans-serif] text-[8px]">
      <div className="flex h-4 items-center justify-between border-y border-[#6f6f73] bg-[#9b9a9e] pr-1 font-bold text-[#161616]">
        Command Window
        <span className="flex items-center gap-[7px]">
          <button type="button" aria-label="Restore command window"><RestoreIcon /></button>
          <button type="button" aria-label="Close command window"><X className="size-[7px]" strokeWidth={4} /></button>
        </span>
      </div>
      <div className="flex justify-between bg-linear-to-b from-[#c5c5c6] to-[#b5b5b6]">
        <div className="flex flex-col leading-[10px] text-[#222]">
          <p className="pl-px">: _SAVE</p>
          <p className="pl-px">:</p>
          <p className="pl-px">: _SAVE</p>
        </div>
        <div className="w-[11px] bg-[#bcbcbd] pt-1">
          <svg viewBox="0 0 6 4" className="mx-auto h-1 w-1.5" aria-hidden="true"><path d="M3 0L6 4H0Z" fill="#111" /></svg>
        </div>
      </div>
    </section>
  );
}

export default function App() {
  return (
    <div className="flex h-screen min-h-[600px] flex-col overflow-hidden bg-[#f1eff3] font-['Noto_Sans','Open_Sans',sans-serif] text-[7px] leading-[9px] text-[#2c2c30]">
      <Header />
      <Ribbon />
      <div className="flex min-h-0 flex-1">
        <Workspace />
        <Panel />
      </div>
      <CommandWindow />
    </div>
  );
}
